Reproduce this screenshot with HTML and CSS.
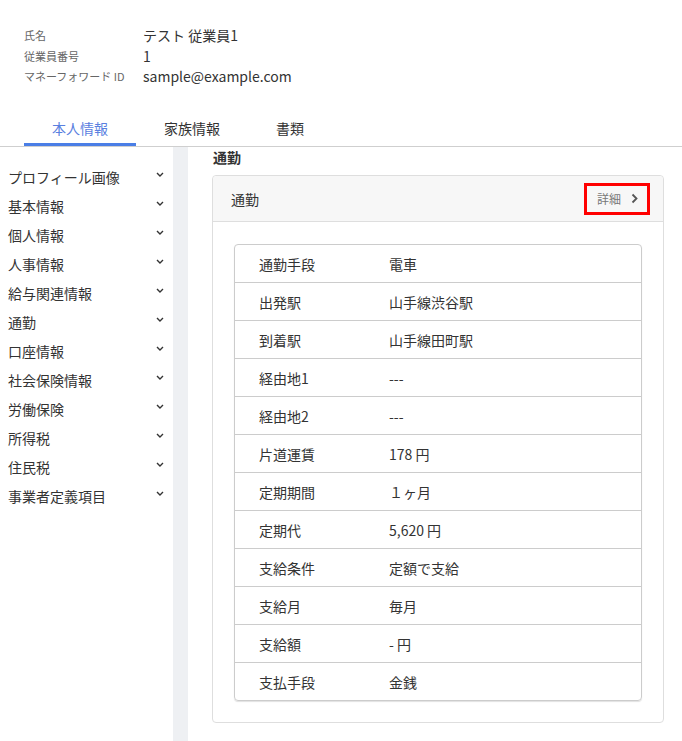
FILE: index.html
```html
<!DOCTYPE html>
<html lang="ja">
<head>
<meta charset="utf-8">
<link rel="stylesheet" href="styles.css">
</head>
<body>
<div class="info">
  <div class="info-label">氏名</div><div class="info-value">テスト 従業員1</div>
  <div class="info-label">従業員番号</div><div class="info-value">1</div>
  <div class="info-label">マネーフォワード ID</div><div class="info-value">sample@example.com</div>
</div>
<div class="tabs">
  <div class="tab active">本人情報</div>
  <div class="tab">家族情報</div>
  <div class="tab">書類</div>
</div>
<div class="layout">
  <nav class="sidebar">
    <div class="side-item"><span>プロフィール画像</span><svg class="chev" viewBox="0 0 8 5"><path d="M1 1l3 3 3-3"/></svg></div>
    <div class="side-item"><span>基本情報</span><svg class="chev" viewBox="0 0 8 5"><path d="M1 1l3 3 3-3"/></svg></div>
    <div class="side-item"><span>個人情報</span><svg class="chev" viewBox="0 0 8 5"><path d="M1 1l3 3 3-3"/></svg></div>
    <div class="side-item"><span>人事情報</span><svg class="chev" viewBox="0 0 8 5"><path d="M1 1l3 3 3-3"/></svg></div>
    <div class="side-item"><span>給与関連情報</span><svg class="chev" viewBox="0 0 8 5"><path d="M1 1l3 3 3-3"/></svg></div>
    <div class="side-item"><span>通勤</span><svg class="chev" viewBox="0 0 8 5"><path d="M1 1l3 3 3-3"/></svg></div>
    <div class="side-item"><span>口座情報</span><svg class="chev" viewBox="0 0 8 5"><path d="M1 1l3 3 3-3"/></svg></div>
    <div class="side-item"><span>社会保険情報</span><svg class="chev" viewBox="0 0 8 5"><path d="M1 1l3 3 3-3"/></svg></div>
    <div class="side-item"><span>労働保険</span><svg class="chev" viewBox="0 0 8 5"><path d="M1 1l3 3 3-3"/></svg></div>
    <div class="side-item"><span>所得税</span><svg class="chev" viewBox="0 0 8 5"><path d="M1 1l3 3 3-3"/></svg></div>
    <div class="side-item"><span>住民税</span><svg class="chev" viewBox="0 0 8 5"><path d="M1 1l3 3 3-3"/></svg></div>
    <div class="side-item"><span>事業者定義項目</span><svg class="chev" viewBox="0 0 8 5"><path d="M1 1l3 3 3-3"/></svg></div>
  </nav>
  <div class="strip"></div>
  <main class="main">
    <h2 class="heading">通勤</h2>
    <section class="card">
      <div class="card-head">
        <span class="card-title">通勤</span>
        <a class="detail"><span>詳細</span><svg class="arrow" viewBox="0 0 7 11"><path d="M1.5 1.5l4 4-4 4"/></svg></a>
      </div>
      <div class="card-body">
        <div class="table">
          <div class="row"><div class="cell-label">通勤手段</div><div class="cell-value">電車</div></div>
          <div class="row"><div class="cell-label">出発駅</div><div class="cell-value">山手線渋谷駅</div></div>
          <div class="row"><div class="cell-label">到着駅</div><div class="cell-value">山手線田町駅</div></div>
          <div class="row"><div class="cell-label">経由地1</div><div class="cell-value">---</div></div>
          <div class="row"><div class="cell-label">経由地2</div><div class="cell-value">---</div></div>
          <div class="row"><div class="cell-label">片道運賃</div><div class="cell-value">178 円</div></div>
          <div class="row"><div class="cell-label">定期期間</div><div class="cell-value">１ヶ月</div></div>
          <div class="row"><div class="cell-label">定期代</div><div class="cell-value">5,620 円</div></div>
          <div class="row"><div class="cell-label">支給条件</div><div class="cell-value">定額で支給</div></div>
          <div class="row"><div class="cell-label">支給月</div><div class="cell-value">毎月</div></div>
          <div class="row"><div class="cell-label">支給額</div><div class="cell-value">- 円</div></div>
          <div class="row"><div class="cell-label">支払手段</div><div class="cell-value">金銭</div></div>
        </div>
      </div>
    </section>
  </main>
</div>
</body>
</html>
```

FILE: styles.css
```css
* { box-sizing: border-box; }
html, body { margin: 0; padding: 0; background: #fff; }
body {
  font-family: "Noto Sans CJK JP", "Noto Sans", sans-serif;
  color: #333;
  font-size: 14px;
}
.info {
  display: grid;
  grid-template-columns: 119px auto;
  padding: 25px 24px 0;
  line-height: 20.5px;
}
.info-label { font-size: 11px; color: #666; }
.info-value { font-size: 14px; color: #333; }
.tabs {
  display: flex;
  margin-top: 31.5px;
  padding-left: 24px;
  border-bottom: 1px solid #cfcfcf;
}
.tab {
  padding: 0 28px 5px;
  line-height: 20px;
  font-size: 14px;
  color: #333;
  border-bottom: 3px solid transparent;
}
.tab.active { color: #5a80e0; border-bottom-color: #4a7ee6; }
.layout { display: flex; }
.sidebar { width: 173px; padding-top: 15.5px; }
.side-item {
  display: flex;
  justify-content: space-between;
  align-items: center;
  height: 29px;
  padding: 0 9px 0 8px;
  font-size: 14px;
  line-height: 20px;
  color: #333;
}
.chev {
  width: 8px; height: 5px;
  margin-top: -5px;
  fill: none; stroke: #333; stroke-width: 1.4;
}
.strip { width: 15px; background: #eef0f3; }
.main { flex: 1; padding: 0 18px 18px 24px; }
.heading {
  margin: 0 0 0 1px;
  font-size: 14px;
  line-height: 20px;
  font-weight: bold;
  color: #333;
}
.card {
  margin-top: 8px;
  border: 1px solid #dedede;
  border-radius: 4px;
}
.card-head {
  display: flex;
  justify-content: space-between;
  align-items: center;
  height: 46px;
  padding: 0 13px 0 18px;
  background: #f7f7f7;
  border-bottom: 1px solid #dedede;
  border-radius: 4px 4px 0 0;
}
.card-title { font-size: 14px; color: #333; }
.detail {
  display: flex;
  align-items: center;
  gap: 10px;
  height: 32px;
  padding: 0 9px 0 10px;
  border: 3px solid #f00;
  font-size: 12px;
  color: #777;
}
.arrow { width: 7px; height: 11px; fill: none; stroke: #555; stroke-width: 1.8; }
.card-body { padding: 22px 21px 21px; }
.table {
  border: 1px solid #cccccc;
  border-radius: 4px;
  box-shadow: 0 1px 1px rgba(0,0,0,0.12);
}
.row {
  display: flex;
  align-items: center;
  height: 38px;
  padding-left: 24px;
  border-top: 1px solid #cccccc;
  font-size: 14px;
}
.row:first-child { height: 37px; border-top: none; }
.cell-label { width: 130px; color: #333; }
.cell-value { color: #333; }
```
